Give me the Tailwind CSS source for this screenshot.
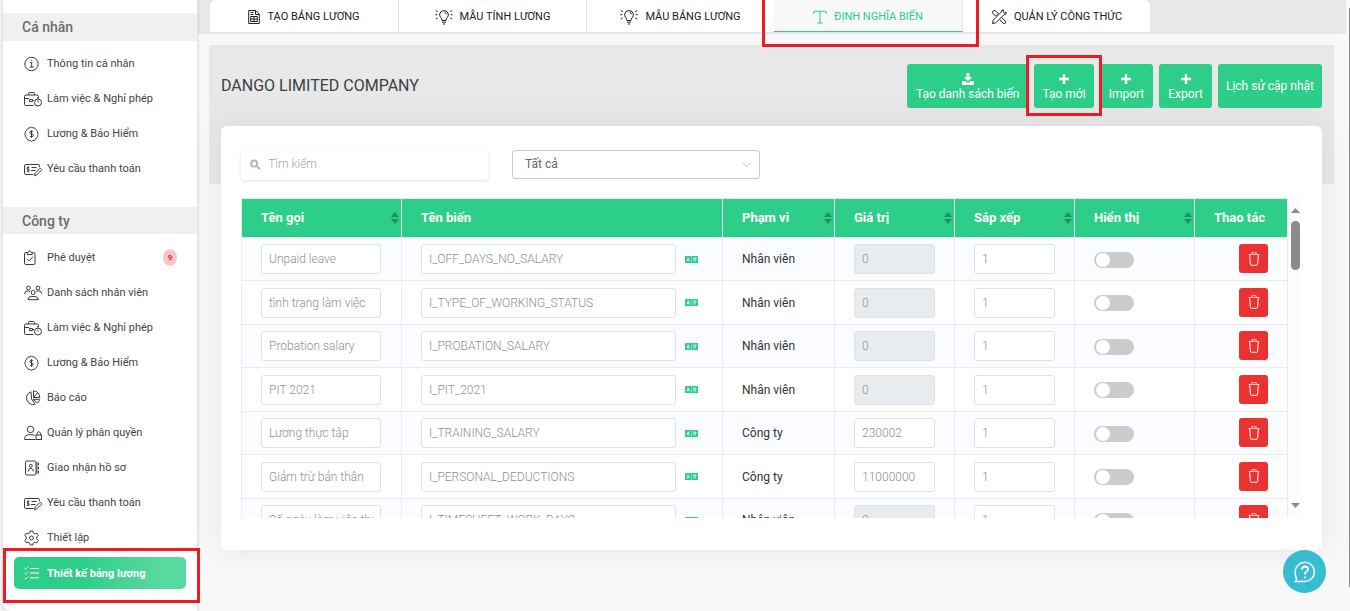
<!DOCTYPE html>
<html lang="vi">
<head>
<meta charset="utf-8">
<meta name="viewport" content="width=device-width, initial-scale=1">
<title>Định nghĩa biến</title>
<script src="https://cdn.jsdelivr.net/npm/@tailwindcss/browser@4"></script>
</head>
<body class="h-screen overflow-hidden bg-[#f8f8f8] font-['Roboto',sans-serif] text-[#3c4043]">
<svg class="hidden" aria-hidden="true">
  <symbol id="i-info" viewBox="0 0 18 16"><circle cx="7.500" cy="8" r="6.700"/><path d="M6 6.500h1.700V11M5.700 11h4M7.500 4v.8"/></symbol>
  <symbol id="i-work" viewBox="0 0 18 16"><path d="M4.500 4V2.500Q4.500 1.500 5.500 1.500h4q1 0 1 1V4M9.500 14.500H1.500q-1 0-1-1v-8q0-1.500 1.500-1.500h11q1.500 0 1.500 1.500V7M.5 7.500h4.500M5.500 8.500v2h3v-2zM8.500 9.500h1.500"/><circle cx="14" cy="11.500" r="3.500"/><path d="M14 9.500v2.200M13 6.800h2"/></symbol>
  <symbol id="i-money" viewBox="0 0 18 16"><path d="M7.500 1q1.300 1.200 2.800 1 1 .2 1.500 1.300.3 1 1.300 1.500.8.800.5 2 .2 1 .7 1.400-.2.900-.7 1.400.2 1.300-.5 2-1 .5-1.400 1.500-.5 1-1.500 1.300-1.400-.2-2.700 1-1.300-1.200-2.700-1-1-.3-1.500-1.300-.4-1-1.400-1.500-.7-.8-.5-2L.700 8.200l.7-1.400q-.3-1.300.5-2 1-.5 1.300-1.500.5-1.100 1.500-1.300 1.500.2 2.800-1z"/><path d="M9.300 6Q9 5.200 7.500 5.200T5.900 6.500q0 1.200 1.600 1.400 1.800.2 1.800 1.500T7.500 10.800Q6 10.800 5.700 9.900M7.500 4.200v7.600"/></symbol>
  <symbol id="i-pay" viewBox="0 0 18 16"><path d="M9.500 13.500H1.800Q.5 13.500.5 12.200V4.800Q.5 3.500 1.800 3.500h12.500q1.200 0 1.200 1.300v1.400M5.300 6.500Q3 5.700 2.900 7.200 3 8.300 4.200 8.400q1.300.2 1.200 1.200-.3 1.200-2.600.5M4.100 5.300v6M7.500 6.500h5M7 9.500h4.500"/><path d="M10.500 14.700l.6-2.400 4.700-4.700q.8-.4 1.400.3.700.8.100 1.500l-4.600 4.600z"/></symbol>
  <symbol id="i-check" viewBox="0 0 18 16"><path d="M3 2.500H1.800Q.5 2.500.5 3.800v9.500q0 1.200 1.300 1.200h8q1.200 0 1.200-1.200V3.800Q11 2.500 9.800 2.500H8.500M3.200 2.500h1q.2-1.700 1.500-1.700t1.500 1.700h1.100V4.500H3.200zM3.200 9l2 2 3.800-4.300"/></symbol>
  <symbol id="i-people" viewBox="0 0 18 16"><circle cx="4.500" cy="3" r="1.900"/><circle cx="14" cy="3" r="1.900"/><rect x="7.300" y="5.300" width="3.600" height="4.200" rx="1.500"/><path d="M.5 9Q.8 6 3.500 5.900q1.500 0 2.500.9M18 9q-.5-3-3.200-3.100-1.600 0-2.600.9M4 14.700q.2-3 3.200-3.200h4q2.900.2 3.300 3.200z"/></symbol>
  <symbol id="i-pie" viewBox="0 0 18 16"><path d="M7 1.800A6.500 6.500 0 1 0 11.200 14.200L7.500 9zM9.500.8v6.700h6.200Q15.500 1.500 9.500.8zM9.500 7.500l4-4.500M9 9.300h6.500q-.2 2.200-2 3.700z"/></symbol>
  <symbol id="i-role" viewBox="0 0 18 16"><circle cx="6.500" cy="4.500" r="3.200"/><path d="M11 14.500H.6q-.2-4.500 4.400-4.800h3q1.700.1 2.700.9"/><rect x="12" y="10" width="5.500" height="4.500"/><path d="M13 10V8.300q.2-1.400 1.700-1.500 1.600.1 1.800 1.500V10"/></symbol>
  <symbol id="i-file" viewBox="0 0 18 16"><rect x="1.500" y="1" width="10.500" height="14" rx="1.300"/><circle cx="6.800" cy="5.800" r="1.500"/><path d="M4.200 11.500q.2-3 2.600-3.200 2.400.2 2.600 3.200M12 3h2.500v2H12M12 7h2.500v2H12M12 11h2.500v2H12"/></symbol>
  <symbol id="i-gear" viewBox="0 0 18 16"><path d="M6.200 1h2.600l.5 2 1.500.8 2-.6 1.400 2.300L12.700 7v2l1.500 1.500-1.400 2.300-2-.6-1.500.8-.5 2H6.200l-.5-2-1.500-.8-2 .6-1.400-2.300L2.300 9V7L.8 5.500l1.400-2.300 2 .6L5.700 3z"/><circle cx="7.500" cy="8" r="2"/></symbol>
  <symbol id="i-list" viewBox="0 0 18 16"><path d="M.7 3l1.200 1.200L4.300 1.500M.7 8l1.200 1.200 2.400-2.700M.7 13l1.200 1.200 2.400-2.700M6 3.500h9M6 8h9M6 12.800h9"/></symbol>
  <symbol id="i-bulb" viewBox="0 0 18 16"><path d="M7 11.500Q7 9.800 5.700 8.500 4.400 6.800 4.700 4.900 5.300 1.800 9 1.500q3.700.3 4.300 3.400.3 1.900-1 3.600Q11 9.800 11 11.500zM7 13.200h4M8 15h2M11.500 5.200Q11.100 3.600 9.500 3.300M.3 5.700h2M15.700 5.700h2M.8 1.500l1.900 1.100M17.200 1.500l-1.900 1.100M.8 10l1.900-1.100M17.200 10l-1.900-1.100"/></symbol>
  <symbol id="i-sheet" viewBox="0 0 12 16"><path d="M.7 1.500h7l3.600 3.700v9.300H.7zM7.500 1.500v4h3.800M2.700 7.500h6.600v5H2.700zM2.700 10h6.600M6 7.500v5M2.500 3.500h3M2.500 5.500h3"/></symbol>
  <symbol id="i-type" viewBox="0 0 14 16"><path d="M1 5V2.200h12V5M7 2.200v11.600M4.500 14h5"/></symbol>
  <symbol id="i-tools" viewBox="0 0 16 16"><path d="M1.300 3.800Q1.500 1.500 4 1.300L7.300 4.600M1.300 3.800L4.600 7.200M4.800 6.900l2.300-2.300M1.500 14.500l.8-3.400L10.200 3.200Q10 .8 12.800.9l-.7 1.900 1.300 1.200 1.800-.8q.2 2.800-2.500 2.700l-7.800 7.800zM10.500 8.300l3.800 3.800q.9 1.200 0 2.100-1.200.9-2.200 0L8.400 10.500"/></symbol>
  <symbol id="i-plus" viewBox="0 0 12 12"><path d="M4.800 1h2.400v3.800H11v2.400H7.200V11H4.800V7.200H1V4.800h3.800z"/></symbol>
  <symbol id="i-trash" viewBox="0 0 12 14"><path d="M.5 2.500h11M3.800 2.300V.7h4.400v1.600" opacity=".7"/><path d="M1.700 2.700l.6 9q.1 1.600 1.500 1.600h4.400q1.400 0 1.500-1.600l.6-9"/></symbol>
  <symbol id="i-lang" viewBox="0 0 13 7"><rect width="13" height="7" rx=".5" fill="#2dce89"/><path d="M6.500 0v7" stroke="#b9efd6" stroke-width=".5"/><path d="M2 5.300L3.200 1.700 4.500 5.300M2.400 4.200h1.700M8 2.300h3.500M9.800 1.500v.8M8.300 5.300q2-.8 2.600-3M8.600 3.300q.7 1.500 2.500 2" fill="none" stroke="#fff" stroke-width=".7"/></symbol>
  <symbol id="i-sort" viewBox="0 0 8 12"><path d="M4 0l4 5H0zM0 7h8l-4 5z"/></symbol>
</svg>

<div class="flex h-full">
  <aside class="relative ml-[3px] w-[194px] shrink-0 rounded-bl-lg bg-white shadow-[0_0_4px_rgba(0,0,0,0.2)]">
    <h2 class="mt-[13px] flex h-7 items-center bg-[#f0f0f0] pl-[19px] text-sm font-medium text-[#6b6e70]">Cá nhân</h2>
    <nav id="personal" class="mt-[5px]" aria-label="Cá nhân"></nav>
    <h2 class="mt-[21px] flex h-[27px] items-center bg-[#f0f0f0] pl-[19px] text-sm font-medium text-[#6b6e70]">Công ty</h2>
    <nav id="company" class="mt-[6px]" aria-label="Công ty"></nav>
    <div class="relative mx-[11px] mt-[2px]">
      <a href="#" class="flex h-8 items-center rounded-[5px] bg-linear-to-r from-[#2dce89] from-40% to-[#57d9a0] to-85% pl-[10px] text-[11px] font-bold text-white">
        <svg class="mr-[5px] h-4 w-[18px] fill-none stroke-white" aria-hidden="true"><use href="#i-list"/></svg><span class="pt-[2px]">Thiết kế bảng lương</span></a>
      <div class="pointer-events-none absolute -inset-x-[11px] -top-[9px] -bottom-[14px] -mr-[3px] border-3 border-[#ed1c24]"></div>
    </div>
  </aside>

  <div class="flex min-w-0 flex-1 flex-col">
    <nav class="mr-1 ml-px bg-[#e8e8e8] pr-3 pl-3" aria-label="Bảng lương">
      <div class="flex h-[34px] border-b-2 border-[#e4e4ee] text-[11px]">
        <a href="#" class="flex w-[189px] items-center justify-center gap-[7px] rounded-tl-md border-r border-[#e4e4ee] bg-white pt-[2px] text-[#222]"><svg class="h-4 w-3 fill-none stroke-current" aria-hidden="true"><use href="#i-sheet"/></svg>TẠO BẢNG LƯƠNG</a>
        <a href="#" class="flex w-[188px] items-center justify-center gap-[7px] border-r border-[#e4e4ee] bg-white pt-[2px] text-[#222]"><svg class="h-4 w-[18px] fill-none stroke-current" aria-hidden="true"><use href="#i-bulb"/></svg>MẪU TÍNH LƯƠNG</a>
        <a href="#" class="flex w-[187px] items-center justify-center gap-[7px] bg-white pt-[2px] text-[#222]"><svg class="h-4 w-[18px] fill-none stroke-current" aria-hidden="true"><use href="#i-bulb"/></svg>MẪU BẢNG LƯƠNG</a>
        <div class="relative w-[189px]">
          <a href="#" aria-current="page" class="flex h-full items-center justify-center gap-[7px] border-r border-b border-r-[#e4e4ee] border-b-[#2dce89] bg-[#f8f8f8] pt-[3px] text-[#2dce89]"><svg class="h-4 w-[14px] fill-none stroke-current" aria-hidden="true"><use href="#i-type"/></svg>ĐỊNH NGHĨA BIẾN</a>
          <div class="pointer-events-none absolute -top-2 -right-4 -bottom-[15px] -left-3 z-10 border-3 border-[#ed1c24]"></div>
        </div>
        <a href="#" class="flex w-[187px] items-center justify-center gap-[7px] rounded-tr-md bg-white pt-[2px] text-[#222]"><svg class="h-4 w-4 fill-none stroke-current" aria-hidden="true"><use href="#i-tools"/></svg>QUẢN LÝ CÔNG THỨC</a>
      </div>
    </nav>

    <main class="mt-[11px] mr-4 ml-3">
      <header class="flex h-[139px] items-start justify-between bg-[#e8e8e8] px-3 pt-[19px]">
        <h1 class="mt-[10px] text-base">DANGO LIMITED COMPANY</h1>
        <div class="flex h-11 gap-[6px] text-xs text-white">
          <button class="flex flex-col items-center justify-center gap-px rounded-[3px] bg-[#2dce89] px-[9px] pt-[2px]"><svg class="size-3 fill-white" viewBox="0 0 12 12" aria-hidden="true"><path d="M4.500 0h3v4h2.700L6 8.200 1.800 4h2.700zM0 8h3l3 2 3-2h3v4H0z"/></svg>Tạo danh sách biến</button>
          <div class="relative flex">
            <button class="flex flex-col items-center justify-center gap-px rounded-[3px] bg-[#2dce89] px-2 pt-[2px]"><svg class="size-3 fill-white" aria-hidden="true"><use href="#i-plus"/></svg>Tạo mới</button>
            <div class="pointer-events-none absolute -inset-x-2 -top-[9px] -bottom-2 z-10 border-3 border-[#ed1c24]"></div>
          </div>
          <button class="flex flex-col items-center justify-center gap-px rounded-[3px] bg-[#2dce89] px-[9px] pt-[2px]"><svg class="size-3 fill-white" aria-hidden="true"><use href="#i-plus"/></svg>Import</button>
          <button class="flex flex-col items-center justify-center gap-px rounded-[3px] bg-[#2dce89] px-[9px] pt-[2px]"><svg class="size-3 fill-white" aria-hidden="true"><use href="#i-plus"/></svg>Export</button>
          <button class="rounded-[3px] bg-[#2dce89] px-2">Lịch sử cập nhật</button>
        </div>
      </header>

      <section class="relative mx-3 -mt-[58px] rounded-md bg-white px-5 pt-6 pb-8 shadow-[0_0_32px_rgba(136,136,136,0.15)]">
        <div class="flex gap-6">
          <label class="flex h-[30px] w-[247px] items-center gap-2 rounded-[3px] pb-[2px] pl-[9px] shadow-[0_1px_3px_rgba(50,50,93,0.15)]">
            <svg class="size-[11px] fill-none stroke-[#adb5bd] stroke-2" viewBox="0 0 11 11" aria-hidden="true"><circle cx="4.500" cy="4.500" r="3.300"/><path d="M7 7l3.500 3.500"/></svg>
            <input type="search" aria-label="Tìm kiếm" placeholder="Tìm kiếm" class="w-full bg-transparent text-xs font-light outline-none placeholder:text-[#a0a8b0]">
          </label>
          <div class="relative w-[248px]">
            <select aria-label="Phạm vi" class="h-[29px] w-full appearance-none rounded-[3px] border border-[#c8c8c8] bg-white pb-[2px] pl-3 text-xs text-[#666]"><option>Tất cả</option></select>
            <svg class="pointer-events-none absolute top-3 right-[9px] h-[6px] w-[9px] fill-none stroke-[#bbb]" viewBox="0 0 9 6" aria-hidden="true"><path d="M.5.7l4 4 4-4"/></svg>
          </div>
        </div>

        <div class="mt-[18px] flex h-80 overflow-hidden">
          <table class="min-w-0 flex-1 table-fixed border-collapse self-start text-xs">
            <thead>
              <tr id="head" class="h-[39px] bg-[#2dce89] text-left text-[13px] text-white"></tr>
            </thead>
            <tbody id="rows"></tbody>
          </table>
          <div class="flex h-full w-[14px] shrink-0 flex-col items-center bg-[#fcfcfc] py-[10px]" aria-hidden="true">
            <svg class="h-[5px] w-[9px] fill-[#8b8b8b]" viewBox="0 0 9 5"><path d="M4.500 0L9 5H0z"/></svg>
            <div class="mt-2 h-[49px] w-[9px] rounded-full bg-[#8b8b8b]"></div>
            <svg class="mt-auto h-[5px] w-[9px] fill-[#8b8b8b]" viewBox="0 0 9 5"><path d="M0 0h9L4.500 5z"/></svg>
          </div>
        </div>
      </section>
    </main>
  </div>
</div>

<div class="fixed top-2 right-0 bottom-6 w-px bg-[#8b8b8b]" aria-hidden="true"></div>
<button aria-label="Trợ giúp" class="fixed right-6 bottom-[18px] flex size-[43px] items-center justify-center rounded-full bg-[#36bdd1]">
  <svg class="size-[22px] fill-none stroke-white stroke-[1.500]" viewBox="0 0 22 22" aria-hidden="true"><path d="M1.500 20.500q1.300-1.500.9-3.200Q1 14.500 1.200 11A9.600 9.600 0 1 1 11 20.500z"/><path d="M8 8.500Q8 5.500 11 5.500t3 2.700q0 1.500-1.600 2.300Q11 11.300 11 13.500" stroke-width="1.800"/><path d="M11 15.500v1.800" stroke-width="2"/></svg>
</button>

<script>
const item = ([icon, label, badge]) => `
  <a href="#" class="flex h-[35px] items-center pr-5 pl-[21px] text-[11px] text-[#454545]">
    <svg class="mr-[5px] h-4 w-[18px] shrink-0 fill-none stroke-[#3a3a3a]" aria-hidden="true"><use href="#${icon}"/></svg><span class="pt-[2px]">${label}</span>
    ${badge ? `<span class="ml-auto flex h-[17px] w-[14px] items-center justify-center rounded-[50%] bg-[#f9c5c5] text-[8px] font-bold text-[#f5242c]">${badge}</span>` : ''}
  </a>`;
document.getElementById('personal').innerHTML = [
  ['i-info', 'Thông tin cá nhân'], ['i-work', 'Làm việc &amp; Nghỉ phép'],
  ['i-money', 'Lương &amp; Bảo Hiểm'], ['i-pay', 'Yêu cầu thanh toán'],
].map(item).join('');
document.getElementById('company').innerHTML = [
  ['i-check', 'Phê duyệt', 9], ['i-people', 'Danh sách nhân viên'], ['i-work', 'Làm việc &amp; Nghỉ phép'],
  ['i-money', 'Lương &amp; Bảo Hiểm'], ['i-pie', 'Báo cáo'], ['i-role', 'Quản lý phân quyền'],
  ['i-file', 'Giao nhận hồ sơ'], ['i-pay', 'Yêu cầu thanh toán'], ['i-gear', 'Thiết lập'],
].map(item).join('');

document.getElementById('head').innerHTML = [
  ['Tên gọi', 'w-[160px]', true], ['Tên biến', '', false], ['Phạm vi', 'w-[112px]', true], ['Giá trị', 'w-[120px]', true],
  ['Sắp xếp', 'w-[120px]', true], ['Hiển thị', 'w-[120px]', true], ['Thao tác', 'w-[93px]', false],
].map(([t, w, sort]) => `<th scope="col" class="${w} border border-[#e9ecef] pr-[2px] pl-[19px] font-bold"><div class="flex items-center justify-between">${t}${sort ? '<svg class="h-3 w-2 fill-[#1f905f]" aria-hidden="true"><use href="#i-sort"/></svg>' : ''}</div></th>`).join('');

const field = 'h-[30px] rounded-[3px] border border-[#dee2e6] px-[7px] font-light text-[#8f8f8f] outline-none';
document.getElementById('rows').innerHTML = [
  ['Unpaid leave', 'I_OFF_DAYS_NO_SALARY', 'Nhân viên', 0],
  ['tình trạng làm việc', 'I_TYPE_OF_WORKING_STATUS', 'Nhân viên', 0],
  ['Probation salary', 'I_PROBATION_SALARY', 'Nhân viên', 0],
  ['PIT 2021', 'I_PIT_2021', 'Nhân viên', 0],
  ['Lương thực tập', 'I_TRAINING_SALARY', 'Công ty', 230002],
  ['Giảm trừ bản thân', 'I_PERSONAL_DEDUCTIONS', 'Công ty', 11000000],
  ['Số ngày làm việc thực tế', 'I_TIMESHEET_WORK_DAYS', 'Nhân viên', 0],
].map(([name, key, scope, value]) => `
  <tr class="h-[43px] odd:bg-[#fbfcff] even:h-[44px]">
    <td class="border border-[#e9ecef] pl-[19px]"><input aria-label="Tên gọi" value="${name}" class="${field} block w-[120px] bg-white"></td>
    <td class="border border-[#e9ecef] pr-6 pl-[19px]"><div class="flex items-center gap-[9px]"><input aria-label="Tên biến" value="${key}" class="${field} min-w-0 flex-1 bg-white"><svg class="h-[7px] w-[13px] shrink-0" aria-hidden="true"><use href="#i-lang"/></svg></div></td>
    <td class="border border-[#e9ecef] pl-[19px] text-[#333]">${scope}</td>
    <td class="border border-[#e9ecef] pl-[19px]"><input aria-label="Giá trị" value="${value}" ${value ? '' : 'disabled'} class="${field} block w-[81px] bg-white disabled:bg-[#e9ecef]"></td>
    <td class="border border-[#e9ecef] pl-[19px]"><input aria-label="Sắp xếp" value="1" class="${field} block w-[81px] bg-white"></td>
    <td class="border border-[#e9ecef] pt-px pl-[19px]"><input type="checkbox" role="switch" aria-label="Hiển thị" class="block h-4 w-10 appearance-none rounded-full bg-[#ccc] p-px pl-[2px] before:block before:size-[14px] before:rounded-full before:bg-white checked:bg-[#2dce89]"></td>
    <td class="border border-[#e9ecef] pr-[19px] pb-px"><button aria-label="Xóa" class="ml-auto flex size-[29px] items-center justify-center rounded-[3px] bg-[#ec3131]"><svg class="h-[14px] w-3 fill-none stroke-white" aria-hidden="true"><use href="#i-trash"/></svg></button></td>
  </tr>`).join('');
</script>
</body>
</html>
